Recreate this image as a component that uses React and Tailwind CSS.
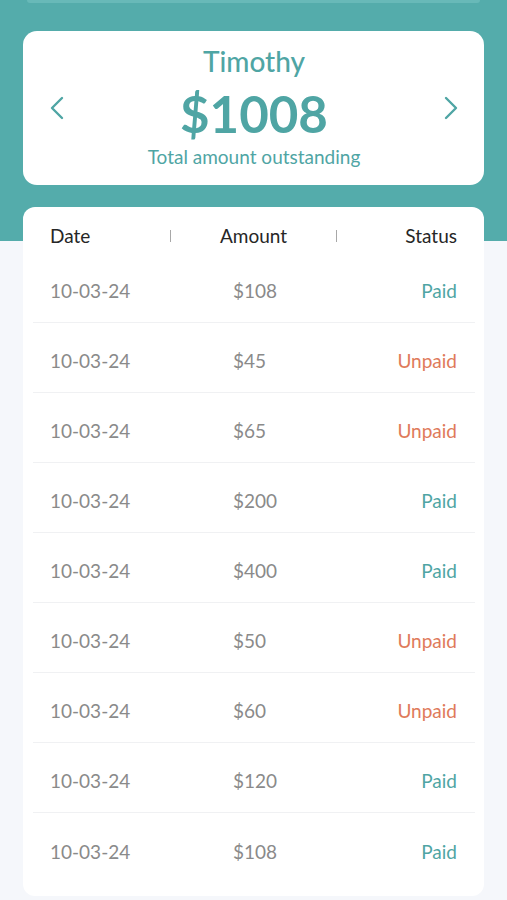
import React from "react";

const rows = [
  ["10-03-24", "$108", "Paid"],
  ["10-03-24", "$45", "Unpaid"],
  ["10-03-24", "$65", "Unpaid"],
  ["10-03-24", "$200", "Paid"],
  ["10-03-24", "$400", "Paid"],
  ["10-03-24", "$50", "Unpaid"],
  ["10-03-24", "$60", "Unpaid"],
  ["10-03-24", "$120", "Paid"],
  ["10-03-24", "$108", "Paid"],
];

function Chevron({ dir }) {
  return (
    <svg width="16" height="26" viewBox="0 0 16 26" fill="none">
      <path
        d={dir === "left" ? "M13 3 L3 13 L13 23" : "M3 3 L13 13 L3 23"}
        stroke="#4fa5a4"
        strokeWidth="2.4"
        strokeLinecap="round"
        strokeLinejoin="round"
      />
    </svg>
  );
}

export default function App() {
  return (
    <div
      className="w-[507px] h-[900px] overflow-hidden bg-[linear-gradient(#54acab_241px,#f5f7fb_241px)]"
      style={{ fontFamily: "Lato, 'Noto Sans', sans-serif" }}
    >
      <div className="mx-[27px] h-[3px] rounded-b-[6px] bg-[#68b9b8]" />
      <div className="mx-[23px] mt-[28px] h-[154px] rounded-[14px] bg-white flex items-center justify-between pl-[26px] pr-[25px]">
        <Chevron dir="left" />
        <div className="flex flex-col items-center self-start pt-[14px]">
          <div className="text-[28px] leading-[32px] text-[#4fa5a4] font-medium">Timothy</div>
          <div className="text-[51px] leading-[56px] font-bold text-[#4fa5a4] mt-[9px]">$1008</div>
          <div className="text-[19px] leading-[24px] text-[#4fa5a4] mt-[3px]">Total amount outstanding</div>
        </div>
        <Chevron dir="right" />
      </div>
      <div className="mx-[23px] mt-[22px] rounded-[12px] bg-white pl-[10px] pr-[9px] pb-[13px]">
        <div className="flex items-center h-[46px] pt-[12px] pl-[17px] pr-[18px] text-[19px] text-[#262626]">
          <div className="w-[120px]">Date</div>
          <div className="w-px h-[12px] bg-[#a8a8a8]" />
          <div className="flex-1 text-center">Amount</div>
          <div className="w-px h-[12px] bg-[#a8a8a8]" />
          <div className="w-[120px] text-right">Status</div>
        </div>
        {rows.map((r, i) => (
          <div
            key={i}
            className={`flex items-center h-[70px] pt-[8px] pl-[17px] pr-[18px] text-[19px] ${i < rows.length - 1 ? "border-b border-[#f0f1f3]" : ""}`}
          >
            <div className="w-[183px] text-[#8a8a8a]">{r[0]}</div>
            <div className="flex-1 text-[#8a8a8a]">{r[1]}</div>
            <div className={`text-right ${r[2] === "Paid" ? "text-[#4fa5a4]" : "text-[#e07a5a]"}`}>{r[2]}</div>
          </div>
        ))}
      </div>
    </div>
  );
}
